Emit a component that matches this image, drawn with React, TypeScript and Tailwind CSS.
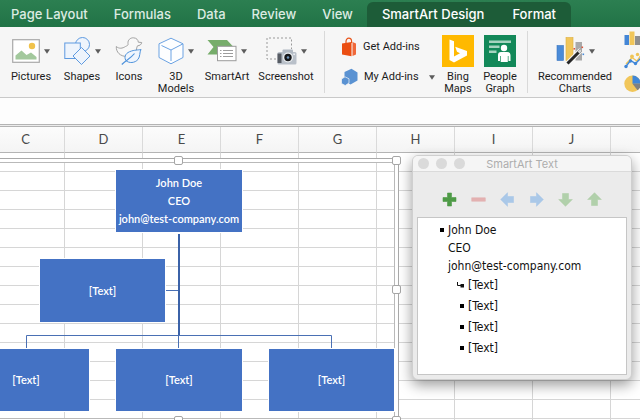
import type { ReactNode } from "react";

const tabs = ["Page Layout", "Formulas", "Data", "Review", "View"];
const contextTabs = ["SmartArt Design", "Format"];
const columns = ["C", "D", "E", "F", "G", "H", "I", "J"];
const rows = Array.from({ length: 15 }, (_, i) => i);

function Caret() {
  return (
    <svg width="6" height="5" viewBox="0 0 6 5" aria-hidden="true">
      <path d="M0 0.3H6L3 4.8Z" fill="#5c5c5c" />
    </svg>
  );
}

function PicturesIcon() {
  return (
    <svg width="28" height="24" viewBox="0 0 28 24" aria-hidden="true">
      <rect x="0.7" y="0.7" width="26.6" height="22.6" fill="#fff" stroke="#a9a9a9" strokeWidth="1.2" />
      <path d="M3.5 20.5V16.5L9.5 11.5L14.5 16L19 13.5L24.5 18V20.5Z" fill="#a3c99d" />
      <circle cx="20" cy="7" r="3.2" fill="#f0c24b" />
    </svg>
  );
}

function ShapesIcon() {
  return (
    <svg width="27" height="28" viewBox="0 0 27 28" aria-hidden="true" fill="#eef4fc" stroke="#5e9ae0" strokeWidth="1">
      <circle cx="18.5" cy="7.5" r="7" />
      <rect x="0.8" y="6" width="15.5" height="15.5" />
      <path d="M17.5 10.5L26 19L17.5 27.5L9 19Z" />
    </svg>
  );
}

function DuckLeafIcon() {
  return (
    <svg width="28" height="28" viewBox="0 0 28 28" aria-hidden="true">
      <path
        d="M1.3 9.5C4 12 7.500 11.500 10.500 9.500C12 8.700 13.500 8.500 13 6.500C12.6 3 15.3 0.7 18.3 0.8C21.6 0.9 23.2 3 23.3 5.2L26.7 5.500C26.500 7.7 24.6 8.6 22.5 8.8C21.8 10.500 21.500 11 21.500 13.500C21.5 18 17 19.500 12 19.500C5 19.500 1 15 1.3 9.5Z"
        fill="#f8f8f8"
        stroke="#a2a2a2"
        strokeWidth="1"
      />
      <path
        d="M26 12.2C25 13.2 21 12.6 16.5 14C11 15.6 8.6 19.2 10.8 23.4C14 26.6 20 26.1 23 22.4C25.3 19.5 24.4 15.6 26 12.2Z"
        fill="#eff5fd"
        stroke="#4f93dc"
        strokeWidth="1"
      />
      <path d="M6.8 27.5C10.5 23.5 15.5 21.5 19.5 16.5" fill="none" stroke="#4f93dc" strokeWidth="1.200" />
    </svg>
  );
}

function CubeIcon() {
  return (
    <svg width="26" height="28" viewBox="0 0 26 28" aria-hidden="true" fill="#fdfeff" stroke="#6ca3e3" strokeWidth="1">
      <path d="M13 1.2L25 6.8V20.5L13 26.8L1 20.5V6.8Z" />
      <path d="M3.5 8.5L13 13L25 6.8M13 13V24" fill="none" />
    </svg>
  );
}

function SmartArtIcon() {
  return (
    <svg width="30" height="24" viewBox="0 0 30 24" aria-hidden="true">
      <path d="M0.5 1H20L26.5 8L21 15.5H0.5L6.5 8Z" fill="#77ad6b" />
      <rect x="10.5" y="7.3" width="18.5" height="14.4" fill="#fff" stroke="#9c9c9c" />
      <path d="M16 11.5H26M16 14.5H26M16 17.5H26" stroke="#9c9c9c" />
      <path d="M13 11.5H14.5M13 14.5H14.5M13 17.5H14.5" stroke="#9c9c9c" />
    </svg>
  );
}

function ScreenshotIcon() {
  return (
    <svg width="31" height="28" viewBox="0 0 31 28" aria-hidden="true">
      <path d="M10 22H1V1H25.500V12" fill="none" stroke="#9a9a9a" strokeDasharray="2 2" />
      <rect x="11.500" y="15" width="19" height="12.500" rx="1.500" fill="#b9c0c9" />
      <rect x="16.500" y="12.500" width="10.500" height="4" rx="1" fill="#b0b8c2" />
      <rect x="11.500" y="16.500" width="4" height="9.500" fill="#565b63" />
      <rect x="27.300" y="16.500" width="1.600" height="1.600" fill="#eef1f5" />
      <circle cx="22" cy="20.500" r="5" fill="#eceff2" />
      <circle cx="22" cy="20.500" r="3.700" fill="#16181b" />
      <circle cx="22" cy="20.500" r="1.300" fill="#6f93b8" />
    </svg>
  );
}

function StoreIcon() {
  return (
    <svg width="16" height="20" viewBox="0 0 16 20" aria-hidden="true">
      <path d="M5 6V4.500C5 2.500 6.200 1.200 7.800 1.200S10.600 2.500 10.600 4.500V6" fill="none" stroke="#e8541a" strokeWidth="1.200" />
      <path d="M1 6.500L10.500 5V19.200L1 17.500Z" fill="#eb4e12" />
      <path d="M11.500 5L15 6.500V17.500L11.500 19Z" fill="#f0683a" />
    </svg>
  );
}

function MyAddinsIcon() {
  return (
    <svg width="17" height="18" viewBox="0 0 17 18" aria-hidden="true">
      <path d="M3.500 4L10.500 0.800L16.500 4.500V12.500L9.500 16.500L3.500 12.500Z" fill="#5a92d2" />
      <path d="M0.500 11L4 8.800L8 10.800V15L4.200 17.500L0.500 15.500Z" fill="#5a92d2" stroke="#f6f6f6" strokeWidth="0.700" />
    </svg>
  );
}

function BingIcon() {
  return (
    <svg width="32" height="32" viewBox="0 0 32 32" aria-hidden="true">
      <rect width="32" height="32" fill="#ffb900" />
      <path d="M7.500 4.500L12 6.200V21.600L18 18.200L15 16.800L13.200 11.800L25 16V20.500L12 27.500L7.500 25Z" fill="#fff" />
    </svg>
  );
}

function PeopleGraphIcon() {
  return (
    <svg width="32" height="32" viewBox="0 0 32 32" aria-hidden="true">
      <rect width="32" height="32" fill="#138859" />
      <path d="M5 6.700H27M5 11.700H15.500M5 16.700H12.500" stroke="#a6d3bf" strokeWidth="2.600" />
      <circle cx="20" cy="13" r="3.200" fill="#fff" />
      <path d="M14 26V20Q14 17 17 17H23Q26.500 17 26.500 20V26H24.500V21H23.800V27H16.700V21H16V26Z" fill="#fff" />
    </svg>
  );
}

function RecommendedIcon() {
  return (
    <svg width="29" height="28" viewBox="0 0 29 28" aria-hidden="true">
      <rect x="1" y="8.500" width="6.500" height="15" fill="#4b8bd8" stroke="#3a76c0" strokeWidth="0.600" />
      <rect x="10" y="0.500" width="7" height="23" fill="#f1c65a" stroke="#dcae3e" strokeWidth="0.600" />
      <rect x="19.500" y="5" width="6.500" height="18.500" fill="#a9a9a9" />
      <path d="M11.500 26.500L25 13" stroke="#f5f5f5" strokeWidth="5" />
      <path d="M11.500 26.500L25 13" stroke="#262626" strokeWidth="3" />
      <path d="M22.500 15.500L25 13" stroke="#d6d6d6" strokeWidth="2.600" />
      <rect x="17.500" y="11" width="1.600" height="1.600" fill="#d9553a" />
      <rect x="25.500" y="9.500" width="1.600" height="1.600" fill="#d9553a" />
      <rect x="26.500" y="16.500" width="1.600" height="1.600" fill="#4b8bd8" />
    </svg>
  );
}

function ColumnChartIcon() {
  return (
    <svg width="16" height="15" viewBox="0 0 16 15" aria-hidden="true">
      <rect x="0.500" y="4" width="4.500" height="10" fill="#4486d6" />
      <rect x="5.500" y="0.500" width="5" height="13.500" fill="#f1c65a" />
      <rect x="11" y="5" width="5" height="9" fill="#8f8f8f" />
    </svg>
  );
}

function LineChartIcon() {
  return (
    <svg width="17" height="17" viewBox="0 0 17 17" aria-hidden="true">
      <path d="M2 12L8 5.500L13 9L17 3" fill="none" stroke="#efc456" strokeWidth="1.300" />
      <path d="M1.500 15L6.500 8.500L11.500 11.500L17 6" fill="none" stroke="#3f86d8" strokeWidth="1.400" />
      <circle cx="8" cy="4.500" r="1.900" fill="#efc456" />
      <circle cx="13.500" cy="2.500" r="1.700" fill="#efc456" />
      <circle cx="2" cy="14.500" r="1.700" fill="#3f86d8" />
      <circle cx="6.500" cy="9" r="1.700" fill="#3f86d8" />
      <circle cx="11.500" cy="11.500" r="1.700" fill="#3f86d8" />
    </svg>
  );
}

function PieChartIcon() {
  return (
    <svg width="18" height="18" viewBox="0 0 18 18" aria-hidden="true">
      <circle cx="8.500" cy="8.800" r="8.200" fill="#f1c65a" />
      <path d="M8.500 8.800V0.600A8.200 8.200 0 0 1 16.700 8.800Z" fill="#3f86d8" />
      <path d="M8.500 8.800H16.700A8.200 8.200 0 0 1 13.500 15.300Z" fill="#808080" />
    </svg>
  );
}

function RibbonButton({ icon, label, menu, width }: { icon: ReactNode; label: string; menu?: boolean; width: string }) {
  return (
    <button type="button" className={`flex shrink-0 flex-col items-center ${width}`}>
      <span className="flex h-10 items-center justify-center gap-1">
        {icon}
        {menu && <Caret />}
      </span>
      <span className="leading-3 whitespace-pre-line">{label}</span>
    </button>
  );
}

function Ribbon() {
  return (
    <div className="flex h-[71px] shrink-0 overflow-hidden border-b border-[#c9c9c9] bg-[#f6f6f6] pt-1 pl-1 font-['Roboto',sans-serif] text-[11px] whitespace-nowrap text-[#1c1c1c]">
      <RibbonButton icon={<PicturesIcon />} label="Pictures" menu width="w-[54px]" />
      <RibbonButton icon={<ShapesIcon />} label="Shapes" menu width="w-12" />
      <RibbonButton icon={<DuckLeafIcon />} label="Icons" width="w-[46px]" />
      <RibbonButton icon={<CubeIcon />} label={"3D\nModels"} menu width="w-12" />
      <RibbonButton icon={<SmartArtIcon />} label="SmartArt" menu width="w-[54px]" />
      <RibbonButton icon={<ScreenshotIcon />} label="Screenshot" menu width="w-[64px]" />
      <div className="mr-4 ml-1.5 h-[62px] w-px shrink-0 bg-[#d9d9d9]" />
      <div className="flex w-[96px] shrink-0 flex-col gap-2.5 pt-1.5 leading-5">
        <button type="button" className="flex items-center gap-1.5">
          <StoreIcon />
          Get Add-ins
        </button>
        <button type="button" className="flex items-center gap-1.5">
          <MyAddinsIcon />
          <span className="mr-1">My Add-ins</span>
          <Caret />
        </button>
      </div>
      <RibbonButton icon={<BingIcon />} label={"Bing\nMaps"} width="w-[42px]" />
      <RibbonButton icon={<PeopleGraphIcon />} label={"People\nGraph"} width="w-[42px]" />
      <div className="mr-2 ml-1.5 h-[62px] w-px shrink-0 bg-[#d9d9d9]" />
      <RibbonButton icon={<RecommendedIcon />} label={"Recommended\nCharts"} menu width="w-[78px]" />
      <div className="ml-2.5 flex shrink-0 flex-col justify-between pb-1">
        <button type="button" aria-label="Column chart">
          <ColumnChartIcon />
        </button>
        <button type="button" aria-label="Line chart">
          <LineChartIcon />
        </button>
        <button type="button" aria-label="Pie chart">
          <PieChartIcon />
        </button>
      </div>
    </div>
  );
}

function Node({ className, lines }: { className: string; lines: string[] }) {
  return (
    <div
      className={`absolute flex flex-col items-center justify-center bg-[#4472c4] font-['Lato',sans-serif] text-[11px] font-semibold leading-[18px] text-white outline-1 outline-white ${className}`}
    >
      {lines.map((line) => (
        <span key={line}>{line}</span>
      ))}
    </div>
  );
}

function Handle({ className }: { className: string }) {
  return <div className={`absolute size-[9px] rounded-xs border border-[#a6a6a6] bg-white ${className}`} />;
}

function Diagram() {
  return (
    <div className="absolute top-[31px] -left-[42px] h-[265px] w-[441px] border border-[#a9a9a9]">
      <div className="absolute inset-0 border-3 border-white" />
      <div className="absolute inset-[3px] border border-[#b9b9b9]" />
      <svg className="absolute inset-0" width="439" height="263" viewBox="0 0 439 263" fill="none" aria-hidden="true">
        <path d="M220 75V177" stroke="#3b62a8" strokeWidth="2" />
        <path d="M207 131.500H219M67.500 189V176.500H372.500V189M219.500 177V189" stroke="#4a70b4" />
      </svg>
      <Node className="top-[11px] left-[157px] h-[62px] w-[126px]" lines={["John Doe", "CEO", "john@test-company.com"]} />
      <Node className="top-[100px] left-[81px] h-[63px] w-[125px]" lines={["[Text]"]} />
      <Node className="top-[190px] left-1 h-[62px] w-[126px]" lines={["[Text]"]} />
      <Node className="top-[190px] left-[157px] h-[62px] w-[126px]" lines={["[Text]"]} />
      <Node className="top-[190px] left-[310px] h-[62px] w-[125px]" lines={["[Text]"]} />
      <Handle className="-top-[3px] left-[215px]" />
      <Handle className="-top-[3px] -right-[3px]" />
      <Handle className="top-[126px] -right-[3px]" />
      <Handle className="-bottom-[3px] left-[215px]" />
      <Handle className="-right-[3px] -bottom-[3px]" />
    </div>
  );
}

function ToolButton({ label, className, path }: { label: string; className: string; path: string }) {
  return (
    <button type="button" aria-label={label} className={className}>
      <svg width="15" height="15" viewBox="0 0 15 15" aria-hidden="true">
        <path d={path} fill="currentColor" stroke="currentColor" strokeWidth="0.600" strokeLinejoin="round" />
      </svg>
    </button>
  );
}

function SmartArtText() {
  return (
    <section
      aria-label="SmartArt Text"
      className="absolute top-7 left-[412px] w-[220px] overflow-hidden rounded-md border border-[#cfcfcf] bg-[#ebebeb] pb-1 shadow-[0_5px_14px_rgba(0,0,0,0.4)]"
    >
      <header className="relative flex h-4 items-center justify-center border-b border-[#dadada] bg-[#f5f5f5]">
        <div className="absolute left-[5px] flex gap-[7px]">
          <button type="button" aria-label="Close" className="size-[11px] rounded-full bg-[#dadada]" />
          <button type="button" aria-label="Minimise" className="size-[11px] rounded-full bg-[#dadada]" />
          <button type="button" aria-label="Zoom" className="size-[11px] rounded-full bg-[#dadada]" />
        </div>
        <h2 className="text-[11px] leading-4 text-[#adadad]">SmartArt Text</h2>
      </header>
      <div className="flex h-[45px] items-center justify-center gap-3.5 pt-2.5">
        <ToolButton label="Add shape" className="text-[#4e9a46]" path="M5.500 1H9.500V5.500H14V9.500H9.500V14H5.500V9.500H1V5.500H5.500Z" />
        <ToolButton label="Remove shape" className="text-[#e3b1b1]" path="M0.700 5.800H14.300V9.200H0.700Z" />
        <ToolButton label="Promote" className="text-[#aac8e8]" path="M0.700 7.500L7.500 0.700V4.500H13.500V10.500H7.500V14.300Z" />
        <ToolButton label="Demote" className="text-[#aac8e8]" path="M14.300 7.500L7.500 0.700V4.500H1.500V10.500H7.500V14.300Z" />
        <ToolButton label="Move down" className="text-[#b1d0ab]" path="M7.500 14.300L0.700 7.500H4.500V1.500H10.500V7.500H14.300Z" />
        <ToolButton label="Move up" className="text-[#b1d0ab]" path="M7.500 0.700L0.700 7.500H4.500V13.500H10.500V7.500H14.300Z" />
      </div>
      <div
        role="textbox"
        aria-label="Outline"
        aria-multiline="true"
        contentEditable
        suppressContentEditableWarning
        spellCheck={false}
        className="mx-1 h-[158px] border border-[#c6c6c6] bg-white pt-[3px] pl-[22px] font-['DejaVu_Sans_Condensed','DejaVu_Sans',sans-serif] text-[12px] leading-[18px] text-[#111] [font-stretch:condensed]"
      >
        <ul>
          <li className="flex items-start gap-1">
            <span className="mt-[7px] size-1 bg-black" />
            <div>
              <p>John Doe</p>
              <p>CEO</p>
              <p>john@test-company.com</p>
            </div>
          </li>
          <li className="flex h-5 items-center gap-1 pl-[17px]">
            <svg width="7" height="6" viewBox="0 0 7 6" aria-hidden="true">
              <path d="M0.500 0V3.500H4" fill="none" stroke="#111" />
              <rect x="3.500" y="2" width="3.500" height="3.500" fill="#111" />
            </svg>
            [Text]
          </li>
          {["a", "b", "c"].map((id) => (
            <li key={id} className="flex h-[21px] items-center gap-1 pl-5">
              <span className="size-1 bg-black" />
              [Text]
            </li>
          ))}
        </ul>
      </div>
    </section>
  );
}

export default function App() {
  return (
    <div className="flex h-screen flex-col overflow-hidden bg-white font-['Inter',sans-serif]">
      <nav className="flex h-[27px] shrink-0 items-end overflow-hidden bg-linear-to-b from-[#2c7f51] to-[#217346] pl-[11px] text-[13px] font-medium whitespace-nowrap text-[#dcebe2]">
        <div className="flex gap-[26px]">
          {tabs.map((tab) => (
            <button key={tab} type="button" className="h-[25px] pb-0.5 leading-4">
              {tab}
            </button>
          ))}
        </div>
        <div className="ml-[14px] flex gap-7 rounded-t-md bg-[#1d5c38] px-[15px] text-white">
          {contextTabs.map((tab) => (
            <button key={tab} type="button" className="h-[25px] pb-0.5 leading-4">
              {tab}
            </button>
          ))}
        </div>
      </nav>
      <Ribbon />
      <input aria-label="Formula bar" className="h-[26px] w-full shrink-0 bg-[#fdfdfd] px-2 text-xs outline-none" />
      <div className="h-[3px] shrink-0 border-y border-[#b4b4b4] bg-[#ececec]" />
      <main className="relative min-h-0 flex-1 overflow-hidden">
        <table className="-ml-[13px] w-[calc(100%+13px)] table-fixed border-separate border-spacing-0">
          <thead>
            <tr className="h-[26px] bg-linear-to-b from-[#fcfcfc] to-[#f4f4f4] font-['Lato',sans-serif] text-[13px] text-[#4a4a4a]">
              {columns.map((name) => (
                <th key={name} scope="col" className="w-[78px] border-r border-b border-r-[#dadada] border-b-[#b4b4b4] p-0 font-normal">
                  {name}
                </th>
              ))}
              <td className="border-b border-[#b4b4b4] p-0" />
            </tr>
          </thead>
          <tbody>
            {rows.map((row) => (
              <tr key={row} className="h-[19px]">
                {columns.map((name) => (
                  <td key={name} className="border-r border-b border-[#d6d6d6] p-0" />
                ))}
                <td className="border-b border-[#d6d6d6] p-0" />
              </tr>
            ))}
          </tbody>
        </table>
        <Diagram />
        <SmartArtText />
      </main>
    </div>
  );
}
